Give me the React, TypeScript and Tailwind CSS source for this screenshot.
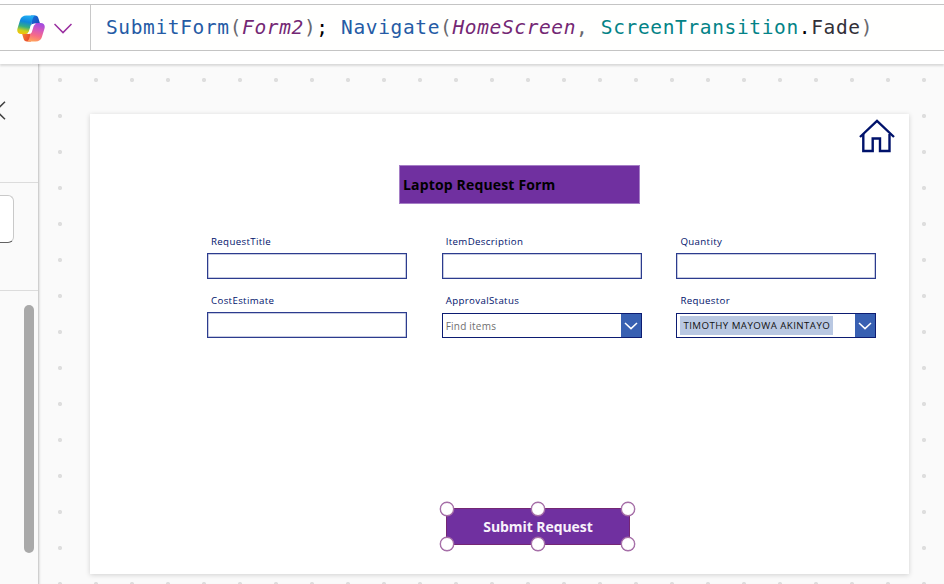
import React from "react";

function CopilotLogo() {
  return (
    <svg width="28" height="27" viewBox="0 0 28 27" className="shrink-0">
      <defs>
        <linearGradient id="cp-left" x1="0.6" y1="0" x2="0.4" y2="1">
          <stop offset="0" stopColor="#22b0f4" />
          <stop offset="0.35" stopColor="#0f86dc" />
          <stop offset="0.62" stopColor="#35ad80" />
          <stop offset="0.85" stopColor="#cfd01c" />
          <stop offset="1" stopColor="#f0c30a" />
        </linearGradient>
        <linearGradient id="cp-right" x1="0.65" y1="0" x2="0.4" y2="1">
          <stop offset="0" stopColor="#a04be0" />
          <stop offset="0.35" stopColor="#d458bd" />
          <stop offset="0.68" stopColor="#f76c86" />
          <stop offset="1" stopColor="#ffa35a" />
        </linearGradient>
        <linearGradient id="cp-top" x1="0" y1="0" x2="1" y2="1">
          <stop offset="0" stopColor="#1478e0" />
          <stop offset="1" stopColor="#1d3fae" />
        </linearGradient>
        <linearGradient id="cp-bottom" x1="0" y1="0" x2="1" y2="0.6">
          <stop offset="0" stopColor="#f59032" />
          <stop offset="1" stopColor="#e8432e" />
        </linearGradient>
      </defs>
      <path d="M14 .5h4c2 0 3 1.200 3.500 3l1.500 5h-4.800c-2 0-3.200 1.200-3.800 3z" fill="url(#cp-top)" />
      <path d="M14 26.500h-4c-2 0-3-1.200-3.500-3l-1.500-5h4.800c2 0 3.200-1.200 3.800-3z" fill="url(#cp-bottom)" />
      <path d="M9.300.5h9.400c-1.600.3-2.400 1.500-2.900 3.100l-3.700 12.200c-.6 1.900-1.700 3.200-3.700 3.200H4.300C1.200 19-.4 16.800.5 13.600L3.100 5C3.900 2.200 6.300.5 9.300.5z" fill="url(#cp-left)" />
      <path d="M18.700 26.500H9.300c1.600-.3 2.400-1.500 2.900-3.100l3.700-12.200c.6-1.900 1.700-3.200 3.700-3.200h4.100c3.100 0 4.700 2.200 3.800 5.400L24.900 22c-.8 2.800-3.200 4.500-6.200 4.500z" fill="url(#cp-right)" />
      <path d="M16.800 8.800h2.600c-1.700.5-2.500 1.500-3 3.100l-1.500 4.800c-.5 1.500-1.400 2.200-3 2.200H9.500c1.700-.4 2.400-1.400 2.900-2.900l1.500-4.900c.5-1.500 1.300-2.300 2.900-2.300z" fill="#fff" />
    </svg>
  );
}

function FormulaBar() {
  return (
    <header className="relative z-10 h-[64px] w-full bg-white pt-1 shadow-[0_2px_2px_rgba(0,0,0,0.13)]">
      <div className="flex h-[47px] items-stretch border-y border-[#c4c4c4] bg-[#fffffe]">
        <div className="flex w-[91px] items-center gap-[9px] border-r border-[#c8c8c8] pl-[17px] pt-[2px]">
          <CopilotLogo />
          <svg width="18" height="11" viewBox="0 0 18 11" fill="none" stroke="#9a2fa0" strokeWidth="1.500">
            <path d="M0.500 1 9 9.600 17.500 1" />
          </svg>
        </div>
        <code className="whitespace-pre pl-[15px] pt-[9px] font-['DejaVu_Sans_Mono','Liberation_Mono',monospace] text-[19.500px] leading-[28px] tracking-[0.630px] text-[#69696f]">
          <span className="text-[#255ba5]">SubmitForm</span>(<i className="text-[#742774]">Form2</i>)<span className="text-black">;</span>{" "}
          <span className="text-[#255ba5]">Navigate</span>(<i className="text-[#742774]">HomeScreen</i>,{" "}
          <span className="text-[#038387]">ScreenTransition</span>
          <span className="text-black">.</span>
          <span className="text-[#323038]">Fade</span>)
        </code>
      </div>
    </header>
  );
}

function SidePanel() {
  return (
    <aside className="flex w-[39px] shrink-0 flex-col overflow-hidden border-r border-[#cfcfcf] bg-[#fafafa]">
      <div className="h-[119px] shrink-0 border-b border-[#dcdcdc] pt-[37px]">
        <svg width="6" height="19" viewBox="0 0 6 19" fill="none" stroke="#424242" strokeWidth="1.500">
          <path d="M5 .7-4 9.500 5 18.300" />
        </svg>
      </div>
      <div className="h-[108px] shrink-0 border-b border-[#dcdcdc] pt-[12px]">
        <div className="h-[48px] w-[14px] rounded-r-[6px] border border-l-0 border-[#c9c9c9] border-b-[#616161] bg-white" />
      </div>
      <div className="flex flex-1 justify-end pr-[4px] pt-[14px]">
        <div className="h-[248px] w-[10px] rounded-full bg-[#a9a9a9]" />
      </div>
    </aside>
  );
}

function Label({ children }: { children: string }) {
  return <div className="pl-[4px] text-[9.700px] leading-[14px] tracking-[0.350px] text-[#00126b]">{children}</div>;
}

function TextField({ label }: { label: string }) {
  return (
    <div>
      <Label>{label}</Label>
      <div className="mt-[4px] h-[26px] border border-[#2c3c8e] bg-white shadow-[inset_0_0_0_0.500px_#8f98c4]" />
    </div>
  );
}

function SelectField({ label, children }: { label: string; children: React.ReactNode }) {
  return (
    <div>
      <Label>{label}</Label>
      <div className="mt-[5px] flex h-[25px] items-stretch justify-between border border-[#0c1c72] bg-white">
        <div className="flex items-center pl-[3px] text-[9.700px] leading-[16px]">{children}</div>
        <div className="flex w-[20px] items-center justify-center bg-[#3860b2]">
          <svg width="14" height="8" viewBox="0 0 14 8" fill="none" stroke="white" strokeWidth="1.500">
            <path d="M1 1l6 5.600L13 1" />
          </svg>
        </div>
      </div>
    </div>
  );
}

const handles = [
  "left-[-7px] top-[-7px]",
  "left-[84px] top-[-7px]",
  "right-[-6px] top-[-7px]",
  "left-[-7px] bottom-[-7px]",
  "left-[84px] bottom-[-7px]",
  "right-[-6px] bottom-[-7px]",
];

function Screen() {
  return (
    <section className="flex h-[460px] w-[819px] flex-col bg-white font-['Open_Sans','Noto_Sans',sans-serif] shadow-[0_1px_5px_rgba(0,0,0,0.17)]">
      <div className="flex h-[51px] justify-end pr-[14px] pt-[5px]">
        <svg width="36" height="34" viewBox="0 0 36 34" fill="none" stroke="#00126b" strokeWidth="2.400">
          <path d="M1 18 18 1.900 35 18" />
          <path d="M4.300 15v17h9.400V19.500h7.300V32h9.500V15" />
        </svg>
      </div>
      <div className="ml-[309px] flex h-[39px] w-[241px] items-center border border-[#a57ec6] bg-[#7030a0] pl-[3px] text-[14px] font-bold leading-none tracking-[0.160px] text-black">
        Laptop Request Form
      </div>
      <div className="ml-[117px] mt-[31px] grid w-[670px] grid-cols-[200px_200px_200px] gap-x-[34.700px] gap-y-[15px]">
        <TextField label="RequestTitle" />
        <TextField label="ItemDescription" />
        <TextField label="Quantity" />
        <TextField label="CostEstimate" />
        <SelectField label="ApprovalStatus">
          <span className="text-[10px] tracking-[0.220px] text-[#6f6f6f]">Find items</span>
        </SelectField>
        <SelectField label="Requestor">
          <span className="h-[19px] bg-[#b9c8e2] px-[3px] leading-[19px] tracking-[0.450px] text-[#111]">TIMOTHY MAYOWA AKINTAYO</span>
        </SelectField>
      </div>
      <button className="relative ml-[356px] mt-[170px] flex h-[37px] w-[184px] items-center justify-center border border-[#742774] bg-[#7030a0] text-[14px] font-bold leading-none text-[#f8f2fb]">
        <span className="tracking-[-0.070px]">Submit Request</span>
        {handles.map((place) => (
          <span key={place} className={`absolute h-[14px] w-[14px] rounded-full border-[1.500px] border-[#a36aa5] bg-white shadow-[0_0_0_0.400px_#a36aa5] ${place}`} />
        ))}
      </button>
    </section>
  );
}

export default function App() {
  return (
    <div className="flex h-[584px] w-[944px] flex-col overflow-hidden bg-[#fafafa]">
      <FormulaBar />
      <div className="flex min-h-0 flex-1">
        <SidePanel />
        <main className="flex-1 bg-[radial-gradient(circle_at_center,#dedede_1.900px,transparent_2.300px)] bg-[length:36px_36px] bg-[position:3px_-2px] pl-[51px] pt-[50px] shadow-[inset_2px_0_2px_-1px_rgba(0,0,0,0.1)]">
          <Screen />
        </main>
      </div>
    </div>
  );
}
